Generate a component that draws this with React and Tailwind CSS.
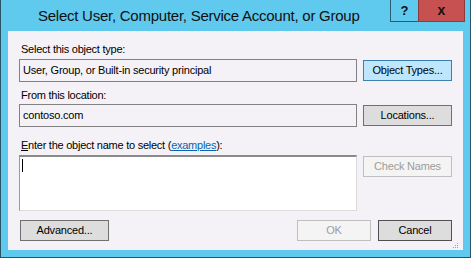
import React from 'react';

const font = { fontFamily: '"Liberation Sans", Arial, sans-serif' };

const Button = ({ children, kind = 'normal', className = '' }) => {
    const styles = {
        normal: 'bg-[#dddddd] border-[#707070] text-black',
        hot: 'bg-[#bee6fd] border-[#3c7fb1] text-black',
        strong: 'bg-[#dddddd] border-[#505050] text-black',
        disabled: 'bg-[#f4f4f4] border-[#bfbfbf] text-[#9c9c9c]',
    };
    return (
        <div className={`h-[21px] border flex items-center justify-center text-[11px] leading-[13px] tracking-[-0.2px] ${styles[kind]} ${className}`}>
            {children}
        </div>
    );
};

const ReadOnlyBox = ({ value }) => (
    <div className="w-[338px] h-[23px] border border-[#828282] bg-[#f4f2f7] flex items-center pl-[3px] text-[11px] leading-[13px] tracking-[-0.2px] text-black">
        {value}
    </div>
);

const Label = ({ children, className = '' }) => (
    <div className={`pl-[2px] text-[11px] leading-[13px] tracking-[-0.25px] text-black ${className}`}>{children}</div>
);

export default function App() {
    return (
        <div style={font} className="w-[471px] h-[258px] bg-[#60c9ee] border-x border-b border-[#2b5366] flex flex-col">
            {/* title bar */}
            <div className="h-[31px] flex items-start shrink-0">
                <div className="pl-[37px] pt-[7px] text-[15px] leading-[18px] tracking-[-0.25px] text-[#101010]">
                    Select User, Computer, Service Account, or Group
                </div>
                <div className="ml-auto mr-[5px] flex h-[22px]">
                    <div className="w-[28px] h-full border-l border-b border-[#2d5d74] flex items-center justify-center text-[13px] font-bold text-[#111]">?</div>
                    <div className="w-[47px] h-full bg-[#c75050] border-b border-r border-l border-[#8d3a3a] flex items-center justify-center text-[14px] font-bold text-[#111]">x</div>
                </div>
            </div>

            {/* client */}
            <div className="mx-[7px] h-[219px] bg-[#f4f2f7] px-[11px] flex flex-col">
                <Label className="mt-[12px]">Select this object type:</Label>
                <div className="mt-[3px] flex items-center gap-[6px]">
                    <ReadOnlyBox value="User, Group, or Built-in security principal" />
                    <Button kind="hot" className="w-[89px]">Object Types...</Button>
                </div>

                <Label className="mt-[7px]">From this location:</Label>
                <div className="mt-[2px] flex items-center gap-[6px]">
                    <ReadOnlyBox value="contoso.com" />
                    <Button className="w-[89px]">Locations...</Button>
                </div>

                <Label className="mt-[12px]">
                    <span className="underline">E</span>nter the object name to select (
                    <span className="text-[#0b63b4] underline">examples</span>):
                </Label>
                <div className="mt-[3px] flex items-start gap-[6px]">
                    <div className="w-[338px] h-[56px] bg-white border-t-2 border-l border-t-[#8a8a8a] border-l-[#9a9a9a] border-r border-b border-r-[#dcdcdc] border-b-[#dcdcdc] pl-[2px] pt-[2px]">
                        <div className="w-px h-[13px] bg-black"></div>
                    </div>
                    <Button kind="disabled" className="w-[89px] mt-px">Check Names</Button>
                </div>

                <div className="mt-[9px] flex items-center">
                    <Button className="w-[89px] ml-px">Advanced...</Button>
                    <div className="ml-auto flex gap-[7px]">
                        <Button kind="disabled" className="w-[74px]">OK</Button>
                        <Button kind="strong" className="w-[74px]">Cancel</Button>
                    </div>
                </div>
                <div className="mt-auto mb-[1px] -mr-[7px] flex justify-end">
                    <svg width="6" height="6" viewBox="0 0 6 6">
                        <rect x="4" y="0" width="1" height="1" fill="#a0a0a0" />
                        <rect x="2" y="2" width="1" height="1" fill="#a0a0a0" />
                        <rect x="4" y="2" width="1" height="1" fill="#a0a0a0" />
                        <rect x="0" y="4" width="1" height="1" fill="#a0a0a0" />
                        <rect x="2" y="4" width="1" height="1" fill="#a0a0a0" />
                        <rect x="4" y="4" width="1" height="1" fill="#a0a0a0" />
                    </svg>
                </div>
            </div>
        </div>
    );
}
